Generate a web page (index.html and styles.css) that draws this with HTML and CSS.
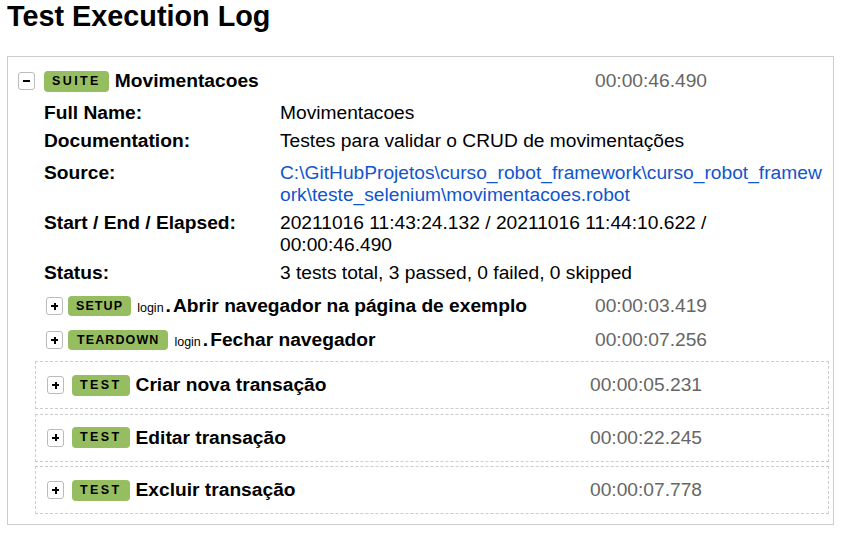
FILE: index.html
```html
<!DOCTYPE html>
<html lang="pt">
<head>
<meta charset="utf-8">
<title>Test Execution Log</title>
<link rel="stylesheet" href="styles.css">
</head>
<body>
<h2 class="title">Test Execution Log</h2>
<div class="log">
  <div class="suite">
    <div class="hdr">
      <div class="hdr-left">
        <span class="toggle toggle-suite"></span>
        <span class="label label-wide">SUITE</span>
        <span class="name">Movimentacoes</span>
      </div>
      <div class="elapsed">00:00:46.490</div>
    </div>
    <div class="meta">
      <div class="mk">Full Name:</div>
      <div class="mv">Movimentacoes</div>
      <div class="mk doc">Documentation:</div>
      <div class="mv doc">Testes para validar o CRUD de movimentações</div>
      <div class="mk">Source:</div>
      <div class="mv"><a class="src" href="#">C:\GitHubProjetos\curso_robot_framework\curso_robot_framework\teste_selenium\movimentacoes.robot</a></div>
      <div class="mk">Start / End / Elapsed:</div>
      <div class="mv">20211016 11:43:24.132 / 20211016 11:44:10.622 / 00:00:46.490</div>
      <div class="mk">Status:</div>
      <div class="mv">3 tests total, 3 passed, 0 failed, 0 skipped</div>
    </div>
    <div class="children">
      <div class="kw">
        <div class="hdr">
          <div class="hdr-left">
            <span class="toggle toggle-kw plus"></span>
            <span class="label label-kw">SETUP</span>
            <span class="kwname"><span class="parent">login</span><span class="dot">.</span>Abrir navegador na página de exemplo</span>
          </div>
          <div class="elapsed">00:00:03.419</div>
        </div>
      </div>
      <div class="kw">
        <div class="hdr">
          <div class="hdr-left">
            <span class="toggle toggle-kw plus"></span>
            <span class="label label-kw label-td">TEARDOWN</span>
            <span class="kwname"><span class="parent">login</span><span class="dot">.</span>Fechar navegador</span>
          </div>
          <div class="elapsed">00:00:07.256</div>
        </div>
      </div>
      <div class="test">
        <div class="hdr">
          <div class="hdr-left">
            <span class="toggle toggle-test plus"></span>
            <span class="label label-wide">TEST</span>
            <span class="name">Criar nova transação</span>
          </div>
          <div class="elapsed">00:00:05.231</div>
        </div>
      </div>
      <div class="test">
        <div class="hdr">
          <div class="hdr-left">
            <span class="toggle toggle-test plus"></span>
            <span class="label label-wide">TEST</span>
            <span class="name">Editar transação</span>
          </div>
          <div class="elapsed">00:00:22.245</div>
        </div>
      </div>
      <div class="test">
        <div class="hdr">
          <div class="hdr-left">
            <span class="toggle toggle-test plus"></span>
            <span class="label label-wide">TEST</span>
            <span class="name">Excluir transação</span>
          </div>
          <div class="elapsed">00:00:07.778</div>
        </div>
      </div>
    </div>
  </div>
</div>
</body>
</html>
```

FILE: styles.css
```css
html, body {
  background: #fff;
}
body {
  margin: 0;
  padding: 0 9px 0 7px;
  font-family: "Liberation Sans", Arial, Helvetica, sans-serif;
  font-size: 19.2px;
  color: #000;
}
.title {
  font-size: 28.8px;
  font-weight: bold;
  line-height: 33px;
  margin: 0 0 23px;
}
.log {
  border: 1px solid #ccc;
  padding: 10px 0 10px 0;
}
.hdr {
  display: flex;
  align-items: center;
  height: 28px;
}
.suite > .hdr {
  padding-left: 10px;
}
.hdr-left {
  flex: 1;
  display: flex;
  align-items: center;
  min-width: 0;
  white-space: nowrap;
}
.elapsed {
  flex-shrink: 0;
  width: 238px;
  color: #666;
  white-space: nowrap;
}
.kw .elapsed {
  width: 233px;
}
.test .elapsed {
  width: 238px;
}
.toggle {
  position: relative;
  flex-shrink: 0;
  width: 15px;
  height: 16px;
  border: 1px solid #bbb;
  border-radius: 3px;
  background: #fff;
}
.toggle::before {
  content: "";
  position: absolute;
  left: 4px;
  top: 7px;
  width: 7px;
  height: 2px;
  background: #000;
}
.toggle.plus::after {
  content: "";
  position: absolute;
  left: 6.5px;
  top: 4.5px;
  width: 2px;
  height: 7px;
  background: #000;
}
.toggle-suite { margin-right: 9px; }
.toggle-kw { margin-right: 5px; }
.toggle-test { margin-right: 8px; }
.label {
  flex-shrink: 0;
  height: 21px;
  line-height: 21px;
  padding: 0 8px;
  border-radius: 4px;
  background: #97bd61;
  color: #000;
  font-size: 12.5px;
  font-weight: bold;
  letter-spacing: 2.4px;
}
.label-kw {
  height: 20px;
  line-height: 20px;
  letter-spacing: 1.1px;
}
.label-td {
  padding: 0 9px;
}
.name {
  font-weight: bold;
  margin-left: 6px;
}
.kwname {
  font-weight: bold;
  margin-left: 6px;
}
.parent {
  font-size: 12.5px;
  font-weight: normal;
  margin-right: 2px;
}
.dot {
  margin-right: 2px;
}
.meta {
  display: grid;
  grid-template-columns: 236px 1fr;
  margin: 4px 10px 0 36px;
}
.mk, .mv {
  padding: 3px 0;
  line-height: 22px;
}
.mk {
  font-weight: bold;
}
.mk.doc, .mv.doc {
  padding-bottom: 7px;
}
.src {
  color: #15c;
  text-decoration: none;
  word-break: break-all;
}
.children {
  display: flex;
  flex-direction: column;
  margin: 4px 4px 0 27px;
}
.kw {
  border: 1px solid transparent;
  padding-left: 10px;
}
.kw + .kw {
  margin-top: 4px;
}
.kw + .test {
  margin-top: 6px;
}
.test + .test {
  margin-top: 4.5px;
}
.test {
  border: 1px dashed #ccc;
  padding: 9px 0 9px 11px;
}
```
